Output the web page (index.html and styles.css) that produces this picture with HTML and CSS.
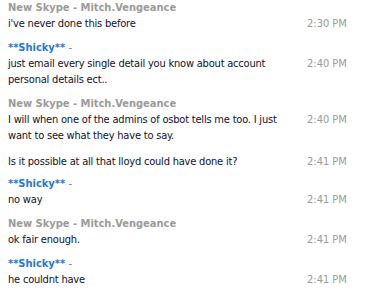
FILE: index.html
```html
<!DOCTYPE html>
<html>
<head>
<meta charset="utf-8">
<link rel="stylesheet" href="styles.css">
</head>
<body>
<div class="chat">
  <div class="sender other">New Skype - Mitch.Vengeance</div>
  <div class="row"><div class="text">i've never done this before</div><div class="time">2:30 PM</div></div>

  <div class="sender me">**Shicky** <span class="dash">-</span></div>
  <div class="row"><div class="text">just email every single detail you know about account<br>personal details ect..</div><div class="time">2:40 PM</div></div>

  <div class="sender other">New Skype - Mitch.Vengeance</div>
  <div class="row"><div class="text">I will when one of the admins of osbot tells me too. I just<br>want to see what they have to say.</div><div class="time">2:40 PM</div></div>
  <div class="row"><div class="text">Is it possible at all that lloyd could have done it?</div><div class="time">2:41 PM</div></div>

  <div class="sender me">**Shicky** <span class="dash">-</span></div>
  <div class="row"><div class="text">no way</div><div class="time">2:41 PM</div></div>

  <div class="sender other">New Skype - Mitch.Vengeance</div>
  <div class="row"><div class="text">ok fair enough.</div><div class="time">2:41 PM</div></div>

  <div class="sender me">**Shicky** <span class="dash">-</span></div>
  <div class="row"><div class="text">he couldnt have</div><div class="time">2:41 PM</div></div>
</div>
</body>
</html>
```
FILE: styles.css
```css
html, body {
  margin: 0;
  padding: 0;
  background: #ffffff;
}
.chat {
  display: flex;
  flex-direction: column;
  padding: 0 0 0 8px;
  font-family: "DejaVu Sans Condensed", "DejaVu Sans", sans-serif;
  font-size: 11px;
  line-height: 16px;
  color: #10102a;
}
.sender {
  font-weight: bold;
  height: 16px;
  margin-top: 8px;
}
.sender:first-child {
  margin-top: 0;
}
.sender.other {
  color: #9a9a9a;
}
.sender.me {
  color: #1f78d1;
}
.sender .dash {
  font-weight: normal;
  color: #5a7fb0;
}
.row {
  display: grid;
  grid-template-columns: 1fr 67px;
}
.row + .row {
  margin-top: 10px;
}
.row + .row + .sender {
  margin-top: 6px;
}
.text {
  white-space: nowrap;
  letter-spacing: -0.2px;
}
.time {
  color: #9a9a9a;
}
```
